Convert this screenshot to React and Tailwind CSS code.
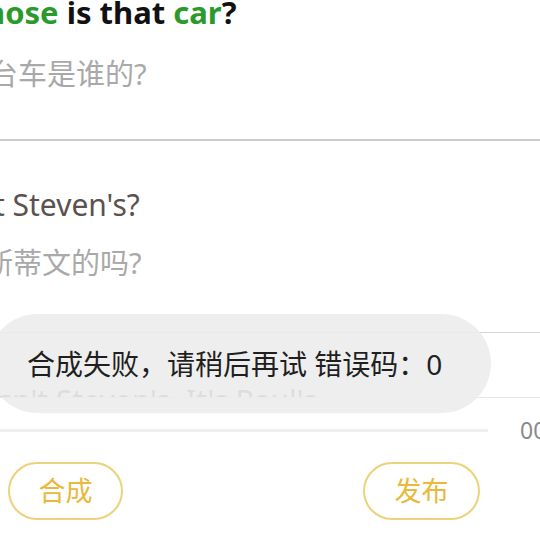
import React from "react";

const CN = '"Noto Sans", "Noto Sans CJK SC", sans-serif';

export default function App() {
  return (
    <div
      className="relative w-[540px] h-[540px] overflow-hidden bg-white"
      style={{ fontFamily: CN }}
    >
      {/* sentence list */}
      <div className="h-[398px] overflow-hidden border-b border-[#e6e6e6]">
        <div className="pb-[47px] border-b-2 border-[#cccccc]">
          <div className="ml-[-45px] mt-[-3px] whitespace-nowrap text-[31px] font-bold leading-[31px] text-[#111]">
            <span className="text-[#2b9a2b]">Whose</span> is that <span className="text-[#2b9a2b]">car</span>?
          </div>
          <div className="ml-[-40px] mt-[28px] whitespace-nowrap text-[29px] leading-[36px] text-[#a9a9a9]">
            那台车是谁的?
          </div>
        </div>
        <div className="pt-[46px] pb-[51px] border-b border-[#d6d6d6]">
          <div className="ml-[-82px] whitespace-nowrap text-[30px] leading-[36px] text-[#5b524e]">
            Isn't it Steven's?
          </div>
          <div className="ml-[-74px] mt-[22px] whitespace-nowrap text-[29px] leading-[36px] text-[#a9a9a9]">
            那是斯蒂文的吗?
          </div>
        </div>
        <div className="pt-[50px] ml-[-93px] whitespace-nowrap text-[30px] leading-[36px] text-[#5b524e]">
          No, it isn't Steven's. It's Paul's.
        </div>
      </div>

      {/* progress */}
      <div className="flex items-center h-[64px]">
        <div className="w-[488px] h-[3px] shrink-0 bg-[#efefef]" />
        <div className="ml-[32px] shrink-0 whitespace-nowrap text-[23px] text-[#8a8a8a]">00:00</div>
      </div>

      {/* buttons */}
      <div className="flex justify-between pl-[8px] pr-[60px]">
        <button className="w-[115px] h-[58px] rounded-full border-2 border-[#ecd278] text-[27px] text-[#e8b93a]">
          合成
        </button>
        <button className="w-[117px] h-[58px] rounded-full border-2 border-[#ecd278] text-[27px] text-[#e8b93a]">
          发布
        </button>
      </div>

      {/* toast */}
      <div className="absolute left-[-12px] top-[314px] w-[503px] h-[99px] rounded-full bg-[#ececec]/90 flex items-center pl-[39px]">
        <span className="whitespace-nowrap text-[28px] text-[#1f1f1f]">合成失败，请稍后再试 错误码：0</span>
      </div>
    </div>
  );
}
